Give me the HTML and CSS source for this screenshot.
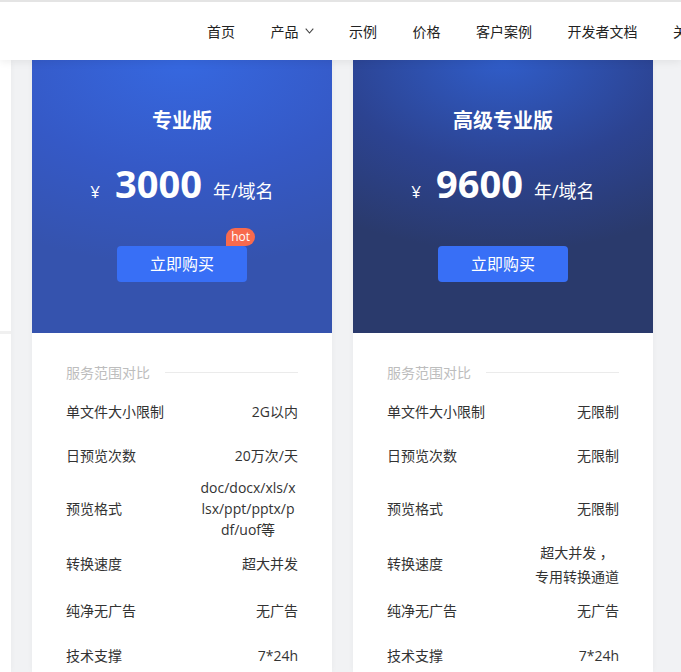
FILE: index.html
```html
<!DOCTYPE html>
<html lang="zh-CN">
<head>
    <meta charset="UTF-8">
    <meta name="viewport" content="width=device-width, initial-scale=1.0">
    <title>价格</title>
    <link rel="stylesheet" href="styles.css">
</head>
<body>
    <header class="topbar">
        <nav class="nav">
            <a href="#">首页</a>
            <a href="#" class="has-menu">产品
                <svg class="chevron" width="9" height="6" viewBox="0 0 9 6"><path d="M0.7 0.7 L4.5 5 L8.3 0.7" fill="none" stroke="#444" stroke-width="1.1"/></svg>
            </a>
            <a href="#">示例</a>
            <a href="#">价格</a>
            <a href="#">客户案例</a>
            <a href="#">开发者文档</a>
            <a href="#">关于我们</a>
        </nav>
    </header>

    <main class="plans">
        <div class="plan plan-free">
            <div class="plan-head"></div>
            <div class="plan-body"></div>
        </div>

        <div class="plan plan-pro">
            <div class="plan-head">
                <h2>专业版</h2>
                <div class="price">
                    <span class="currency">¥</span>
                    <span class="amount">3000</span>
                    <span class="unit">年/域名</span>
                </div>
                <a href="#" class="buy">立即购买<span class="hot">hot</span></a>
            </div>
            <div class="plan-body">
                <div class="scope-title"><span>服务范围对比</span></div>
                <div class="row r1"><span>单文件大小限制</span><span class="val">2G以内</span></div>
                <div class="row r2"><span>日预览次数</span><span class="val">20万次/天</span></div>
                <div class="row r3"><span>预览格式</span><span class="val formats">doc/docx/xls/x<br>lsx/ppt/pptx/p<br>df/uof等</span></div>
                <div class="row r4"><span>转换速度</span><span class="val">超大并发</span></div>
                <div class="row r5"><span>纯净无广告</span><span class="val">无广告</span></div>
                <div class="row r6"><span>技术支撑</span><span class="val">7*24h</span></div>
            </div>
        </div>

        <div class="plan plan-premium">
            <div class="plan-head">
                <h2>高级专业版</h2>
                <div class="price">
                    <span class="currency">¥</span>
                    <span class="amount">9600</span>
                    <span class="unit">年/域名</span>
                </div>
                <a href="#" class="buy">立即购买</a>
            </div>
            <div class="plan-body">
                <div class="scope-title"><span>服务范围对比</span></div>
                <div class="row r1"><span>单文件大小限制</span><span class="val">无限制</span></div>
                <div class="row r2"><span>日预览次数</span><span class="val">无限制</span></div>
                <div class="row r3"><span>预览格式</span><span class="val">无限制</span></div>
                <div class="row r4"><span>转换速度</span><span class="val speed">超大并发 ，<br>专用转换通道</span></div>
                <div class="row r5"><span>纯净无广告</span><span class="val">无广告</span></div>
                <div class="row r6"><span>技术支撑</span><span class="val">7*24h</span></div>
            </div>
        </div>
    </main>
</body>
</html>
```

FILE: styles.css
```css
body {
    margin: 0;
    font-family: "Open Sans", "Noto Sans CJK SC", sans-serif;
    background-color: #f1f2f4;
    color: #333;
    overflow: hidden;
}

.topbar {
    position: relative;
    z-index: 2;
    height: 58px;
    background-color: white;
    border-top: 2px solid #e4e4e4;
    box-shadow: 0 2px 8px rgba(0,0,0,0.07);
    overflow: hidden;
}

.nav {
    display: flex;
    align-items: center;
    gap: 35.5px;
    height: 100%;
    padding-left: 207px;
    white-space: nowrap;
}

.nav a {
    color: #222;
    font-size: 14px;
    text-decoration: none;
    display: flex;
    align-items: center;
}

.chevron {
    margin-left: 6px;
}

.plans {
    display: flex;
    gap: 21px;
    margin-left: -289px;
    height: 612px;
}

.plan {
    width: 300px;
    flex-shrink: 0;
    display: flex;
    flex-direction: column;
    background-color: white;
    box-shadow: 0 0 6px rgba(0,0,0,0.04);
}

.plan-head {
    flex-shrink: 0;
    height: 273px;
    color: white;
    text-align: center;
    box-sizing: border-box;
    padding-top: 46px;
}

.plan-free .plan-head {
    height: 274px;
    border-bottom: 3px solid #f0f0f0;
}

.plan-pro .plan-head {
    background: radial-gradient(ellipse 110% 75% at 50% 0, #3668e0 0%, #3559c6 55%, #3553ae 100%);
}

.plan-premium .plan-head {
    background: radial-gradient(ellipse 100% 70% at 50% 0, #305dc9 0%, #2c4391 55%, #2a3a6c 100%);
}

.plan-head h2 {
    margin: 0;
    font-size: 20px;
    line-height: 30px;
    font-weight: bold;
}

.price {
    margin-top: 23px;
    display: flex;
    justify-content: center;
    align-items: baseline;
    line-height: 48px;
}

.currency {
    font-size: 17px;
    margin-right: 15px;
}

.amount {
    font-size: 38px;
    font-weight: bold;
    margin-right: 11px;
}

.unit {
    font-size: 18px;
}

.buy {
    position: relative;
    display: block;
    width: 130px;
    height: 36px;
    margin: 30px auto 0;
    background-color: #386ff6;
    border-radius: 4px;
    color: white;
    font-size: 16px;
    line-height: 36px;
    text-decoration: none;
}

.hot {
    position: absolute;
    right: -8px;
    top: -18px;
    padding: 0 5px;
    height: 18px;
    line-height: 17px;
    background-color: #f86a4d;
    border-radius: 9px 9px 9px 0;
    font-size: 12px;
}

.plan-body {
    flex: 1;
    padding: 28px 34px 0;
}

.scope-title {
    display: flex;
    align-items: center;
    height: 22px;
    margin-bottom: 6px;
    color: #bdbdbd;
    font-size: 14px;
}

.scope-title::after {
    content: "";
    flex: 1;
    height: 1px;
    margin-left: 15px;
    background-color: #ebebeb;
}

.row {
    display: flex;
    justify-content: space-between;
    align-items: center;
    font-size: 14px;
    color: #333;
}

.r1, .r2, .r6 { height: 44px; }
.r3 { height: 62px; }
.r4 { height: 48px; }
.r5 { height: 46px; }

.val {
    text-align: right;
}

.formats {
    width: 100px;
    text-align: center;
    white-space: nowrap;
    line-height: 21px;
}

.speed {
    text-align: center;
    line-height: 24px;
    margin-top: 4px;
}
```
